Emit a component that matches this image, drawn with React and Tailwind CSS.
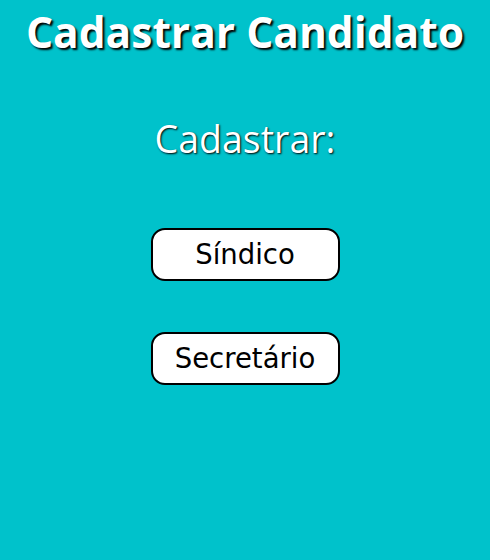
export default function App() {
  return (
    <main className="flex min-h-[560px] flex-col items-center bg-[#00c2cb] font-['Open_Sans',sans-serif]">
      <h1 className="pt-[4px] text-[42.5px] font-bold leading-[56px] text-white [text-shadow:2px_2px_2px_#000]">
        Cadastrar Candidato
      </h1>
      <h2 className="pt-[55px] text-[37.5px] leading-[48px] text-white [text-shadow:1px_1px_2px_#000]">
        Cadastrar:
      </h2>
      <div className="flex flex-col items-center gap-[51px] pt-[65px]">
        <button className="h-[53px] w-[189px] rounded-[14px] border-[2px] border-black bg-white font-['DejaVu_Sans',sans-serif] text-[27.5px] text-black">
          Síndico
        </button>
        <button className="h-[53px] w-[189px] rounded-[14px] border-[2px] border-black bg-white font-['DejaVu_Sans',sans-serif] text-[27.5px] text-black">
          Secretário
        </button>
      </div>
    </main>
  );
}
